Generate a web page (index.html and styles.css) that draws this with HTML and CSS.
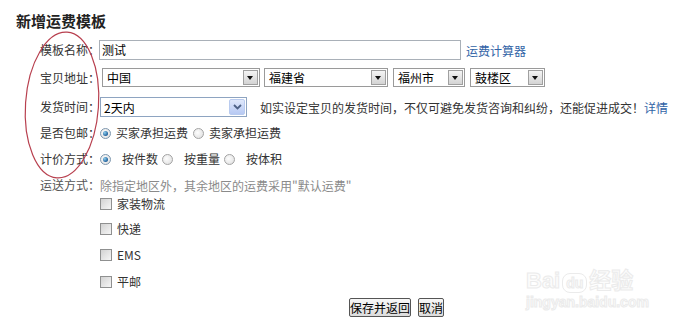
FILE: index.html
```html
<!DOCTYPE html>
<html lang="zh-CN">
<head>
  <meta charset="UTF-8">
  <title>新增运费模板</title>
  <link rel="stylesheet" href="styles.css">
</head>
<body>
  <div class="page">
    <h2 class="title">新增运费模板</h2>
    <div class="form">
      <!-- 模板名称 -->
      <div class="row row-name">
        <span class="label">模板名称：</span>
        <span class="input">测试</span>
        <a class="link calc-link" href="#">运费计算器</a>
      </div>
      <!-- 宝贝地址 -->
      <div class="row row-addr">
        <span class="label">宝贝地址：</span>
        <span class="select sel-country"><span class="sel-text">中国</span><span class="sel-btn"></span></span>
        <span class="select sel-prov"><span class="sel-text">福建省</span><span class="sel-btn"></span></span>
        <span class="select sel-city"><span class="sel-text">福州市</span><span class="sel-btn"></span></span>
        <span class="select sel-area"><span class="sel-text">鼓楼区</span><span class="sel-btn"></span></span>
      </div>
      <!-- 发货时间 -->
      <div class="row row-time">
        <span class="label">发货时间：</span>
        <span class="select-xp"><span class="sel-text">2天内</span><span class="xp-btn"><svg width="9" height="6" viewBox="0 0 9 6"><path d="M1 1 L4.5 4.5 L8 1" fill="none" stroke="#4d6185" stroke-width="1.8"/></svg></span></span>
        <span class="tip">如实设定宝贝的发货时间，不仅可避免发货咨询和纠纷，还能促进成交！</span><a class="link" href="#">详情</a>
      </div>
      <!-- 是否包邮 -->
      <div class="row row-free">
        <span class="label">是否包邮：</span>
        <span class="radio checked"></span><span class="opt">买家承担运费</span>
        <span class="radio"></span><span class="opt">卖家承担运费</span>
      </div>
      <!-- 计价方式 -->
      <div class="row row-price">
        <span class="label">计价方式：</span>
        <span class="radio checked"></span><span class="opt wide">按件数</span>
        <span class="radio"></span><span class="opt wide">按重量</span>
        <span class="radio"></span><span class="opt wide">按体积</span>
      </div>
      <!-- 运送方式 -->
      <div class="row row-ship">
        <span class="label label-light">运送方式：</span>
        <span class="hint">除指定地区外，其余地区的运费采用"默认运费"</span>
      </div>
      <div class="ship-list">
        <div class="ship-item first"><span class="checkbox"></span>家装物流</div>
        <div class="ship-item second"><span class="checkbox"></span>快递</div>
        <div class="ship-item third"><span class="checkbox"></span>EMS</div>
        <div class="ship-item fourth"><span class="checkbox"></span>平邮</div>
      </div>
    </div>
    <div class="actions">
      <button class="btn">保存并返回</button>
      <button class="btn">取消</button>
    </div>

    <!-- red hand-drawn mark round the labels -->
    <svg class="mark" width="90" height="160" viewBox="0 0 90 160">
      <ellipse cx="45" cy="77" rx="36.5" ry="73" transform="rotate(4 45 77)" fill="none" stroke="#b8404f" stroke-width="1.2"/>
    </svg>

    <!-- watermark -->
    <div class="watermark">
      <div class="wm-logo">Bai<span class="wm-du">du</span>经验</div>
      <div class="wm-url">jingyan.baidu.com</div>
    </div>
  </div>
</body>
</html>
```

FILE: styles.css
```css
body {
  margin: 0;
  padding: 0;
  background: #fff;
  font-family: "Noto Sans CJK SC", "Liberation Sans", sans-serif;
  font-size: 12px;
  color: #333;
}
.page {
  position: relative;
  width: 690px;
  height: 330px;
  padding: 11px 0 0 16px;
  box-sizing: border-box;
  overflow: hidden;
}
.title {
  margin: 0 0 9px 0;
  font-size: 15px;
  line-height: 20px;
  font-weight: bold;
  color: #222;
}
.form {
  margin-left: 24px;
}
.row {
  display: flex;
  align-items: center;
  white-space: nowrap;
}
.label {
  width: 60px;
  line-height: 16px;
  color: #333;
}
.label-light {
  color: #555;
}
.link {
  color: #3163a6;
  text-decoration: none;
}

/* row 1 */
.row-name {
  height: 20px;
}
.input {
  box-sizing: border-box;
  width: 362px;
  height: 20px;
  margin-left: -1px;
  padding: 0 2px;
  line-height: 18px;
  border: 1px solid #a9b0b8;
  color: #000;
}
.calc-link {
  margin-left: 5px;
}

/* row 2: plain selects */
.row-addr {
  height: 19px;
  margin-top: 8px;
}
.select {
  box-sizing: border-box;
  display: flex;
  align-items: center;
  justify-content: space-between;
  height: 19px;
  padding: 0 1px 0 4px;
  border: 1px solid #9a9a9a;
  color: #000;
}
.sel-btn {
  position: relative;
  box-sizing: border-box;
  width: 15px;
  height: 15px;
  border: 1px solid #a0a0a0;
  background: linear-gradient(#f4f4f4, #d4d4d4);
}
.sel-btn::after {
  content: "";
  position: absolute;
  left: 3px;
  top: 5px;
  border-width: 4px 3.5px 0 3.5px;
  border-style: solid;
  border-color: #111 transparent transparent transparent;
}
.sel-country {
  width: 158px;
  margin-left: 2px;
}
.sel-prov {
  width: 124px;
  margin-left: 4px;
}
.sel-city {
  width: 72px;
  margin-left: 5px;
}
.sel-area {
  width: 75px;
  margin-left: 5px;
}

/* row 3: xp style select */
.row-time {
  height: 20px;
  margin-top: 10px;
}
.select-xp {
  box-sizing: border-box;
  display: flex;
  align-items: center;
  justify-content: space-between;
  width: 147px;
  height: 20px;
  padding: 0 1px 0 3px;
  border: 1px solid #8ea4c1;
  color: #000;
}
.xp-btn {
  box-sizing: border-box;
  display: flex;
  align-items: center;
  justify-content: center;
  width: 16px;
  height: 16px;
  border: 1px solid #b9cbef;
  border-radius: 2px;
  background: linear-gradient(#dfe8fb, #b7c9f3);
}
.tip {
  margin-left: 13px;
  color: #333;
}

/* radios */
.row-free {
  height: 16px;
  margin-top: 8px;
}
.row-price {
  height: 16px;
  margin-top: 10px;
}
.radio {
  box-sizing: border-box;
  position: relative;
  width: 11px;
  height: 11px;
  border-radius: 50%;
  border: 1px solid #a3a3a3;
  background: radial-gradient(circle at 40% 40%, #fdfdfd, #dcdcdc);
}
.radio.checked {
  border-color: #7d96ad;
}
.radio.checked::after {
  content: "";
  position: absolute;
  left: 2px;
  top: 2px;
  width: 5px;
  height: 5px;
  border-radius: 50%;
  background: radial-gradient(circle at 35% 35%, #8fd0f0, #1f5f9a 70%);
}
.opt {
  margin: 0 5px 0 5px;
  line-height: 16px;
}
.opt.wide {
  margin: 0 4px 0 11px;
}

/* shipping */
.row-ship {
  height: 16px;
  margin-top: 10px;
}
.hint {
  color: #8a8a8a;
}
.ship-list {
  margin-left: 60px;
}
.ship-item {
  display: flex;
  align-items: center;
  height: 16px;
  line-height: 16px;
  color: #333;
}
.ship-item.first {
  margin-top: 3px;
}
.ship-item.second {
  margin-top: 9px;
}
.ship-item.third {
  margin-top: 10px;
}
.ship-item.fourth {
  margin-top: 11px;
}
.checkbox {
  box-sizing: border-box;
  width: 12px;
  height: 12px;
  margin-right: 5px;
  border: 1px solid #8f9090;
  background: linear-gradient(135deg, #d2d2d2, #f6f6f6);
}

/* buttons */
.actions {
  display: flex;
  gap: 7px;
  margin-top: 8px;
  padding-left: 333px;
}
.btn {
  box-sizing: border-box;
  height: 19px;
  padding: 0;
  font-family: "Noto Sans CJK SC", "Liberation Sans", sans-serif;
  font-size: 12px;
  line-height: 16px;
  color: #000;
  border: 1px solid #555;
  border-radius: 2px;
  background: linear-gradient(#f8f8f8, #dcdcdc);
}

/* overlays */
.mark {
  position: absolute;
  left: 17px;
  top: 28px;
}
.watermark {
  position: absolute;
  left: 526px;
  top: 268px;
  color: #fcfcfc;
  -webkit-text-stroke: 1px #ebebeb;
  font-family: "Liberation Sans", "Noto Sans CJK SC", sans-serif;
}
.wm-logo {
  font-size: 22px;
  line-height: 26px;
  font-weight: bold;
}
.wm-du {
  display: inline-block;
  margin: 0 2px;
  padding: 0 3px;
  font-size: 14px;
  border: 1px solid #ebebeb;
  border-radius: 8px;
  line-height: 18px;
}
.wm-url {
  font-size: 14px;
  line-height: 16px;
  font-weight: bold;
}
```
